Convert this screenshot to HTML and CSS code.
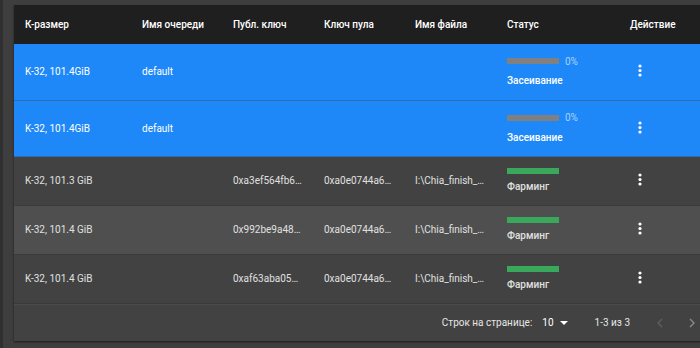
FILE: index.html
```html
<!DOCTYPE html>
<html lang="ru">
<head>
    <meta charset="UTF-8">
    <title>Плоты</title>
    <link rel="stylesheet" href="styles.css">
</head>
<body>
<div class="page">
    <div class="edge"></div>
    <div class="main">
        <div class="card">
            <table class="plots">
                <colgroup>
                    <col class="c1"><col class="c2"><col class="c3"><col class="c4"><col class="c5"><col class="c6"><col class="c7">
                </colgroup>
                <thead>
                <tr>
                    <th>К-размер</th>
                    <th>Имя очереди</th>
                    <th>Публ. ключ</th>
                    <th>Ключ пула</th>
                    <th>Имя файла</th>
                    <th>Статус</th>
                    <th>Действие</th>
                </tr>
                </thead>
                <tbody>
                <tr class="selected">
                    <td>K-32, 101.4GiB</td>
                    <td>default</td>
                    <td></td>
                    <td></td>
                    <td></td>
                    <td>
                        <div class="status">
                            <div class="bar-line"><span class="bar grey"></span><span class="pct">0%</span></div>
                            <div class="label">Засеивание</div>
                        </div>
                    </td>
                    <td><span class="kebab"><svg width="4" height="13" viewBox="0 0 4 13"><circle cx="2" cy="2" r="1.6"/><circle cx="2" cy="6.5" r="1.6"/><circle cx="2" cy="11" r="1.6"/></svg></span></td>
                </tr>
                <tr class="selected">
                    <td>K-32, 101.4GiB</td>
                    <td>default</td>
                    <td></td>
                    <td></td>
                    <td></td>
                    <td>
                        <div class="status">
                            <div class="bar-line"><span class="bar grey"></span><span class="pct">0%</span></div>
                            <div class="label">Засеивание</div>
                        </div>
                    </td>
                    <td><span class="kebab"><svg width="4" height="13" viewBox="0 0 4 13"><circle cx="2" cy="2" r="1.6"/><circle cx="2" cy="6.5" r="1.6"/><circle cx="2" cy="11" r="1.6"/></svg></span></td>
                </tr>
                <tr>
                    <td>K-32, 101.3 GiB</td>
                    <td></td>
                    <td>0xa3ef564fb6…</td>
                    <td>0xa0e0744a6…</td>
                    <td>I:\Chia_finish_…</td>
                    <td>
                        <div class="status farm">
                            <div class="bar-line"><span class="bar green"></span></div>
                            <div class="label">Фарминг</div>
                        </div>
                    </td>
                    <td><span class="kebab"><svg width="4" height="13" viewBox="0 0 4 13"><circle cx="2" cy="2" r="1.6"/><circle cx="2" cy="6.5" r="1.6"/><circle cx="2" cy="11" r="1.6"/></svg></span></td>
                </tr>
                <tr class="hover">
                    <td>K-32, 101.4 GiB</td>
                    <td></td>
                    <td>0x992be9a48…</td>
                    <td>0xa0e0744a6…</td>
                    <td>I:\Chia_finish_…</td>
                    <td>
                        <div class="status farm">
                            <div class="bar-line"><span class="bar green"></span></div>
                            <div class="label">Фарминг</div>
                        </div>
                    </td>
                    <td><span class="kebab"><svg width="4" height="13" viewBox="0 0 4 13"><circle cx="2" cy="2" r="1.6"/><circle cx="2" cy="6.5" r="1.6"/><circle cx="2" cy="11" r="1.6"/></svg></span></td>
                </tr>
                <tr>
                    <td>K-32, 101.4 GiB</td>
                    <td></td>
                    <td>0xaf63aba05…</td>
                    <td>0xa0e0744a6…</td>
                    <td>I:\Chia_finish_…</td>
                    <td>
                        <div class="status farm">
                            <div class="bar-line"><span class="bar green"></span></div>
                            <div class="label">Фарминг</div>
                        </div>
                    </td>
                    <td><span class="kebab"><svg width="4" height="13" viewBox="0 0 4 13"><circle cx="2" cy="2" r="1.6"/><circle cx="2" cy="6.5" r="1.6"/><circle cx="2" cy="11" r="1.6"/></svg></span></td>
                </tr>
                </tbody>
            </table>
            <div class="pager">
                <span class="rows-label">Строк на странице:</span>
                <span class="rows-select">10 <svg width="8" height="4" viewBox="0 0 8 4"><path d="M0 0h8L4 4z"/></svg></span>
                <span class="range">1-3 из 3</span>
                <span class="nav prev"><svg width="6" height="10" viewBox="0 0 6 10"><path d="M5 1L1 5l4 4" fill="none" stroke-width="1.4"/></svg></span>
                <span class="nav next"><svg width="6" height="10" viewBox="0 0 6 10"><path d="M1 1l4 4-4 4" fill="none" stroke-width="1.4"/></svg></span>
            </div>
        </div>
    </div>
</div>
</body>
</html>
```

FILE: styles.css
```css
* {
    margin: 0;
    padding: 0;
    box-sizing: border-box;
}

html, body {
    height: 100%;
    overflow: hidden;
}

body {
    background-color: #424242;
    font-family: Roboto, "Noto Sans", sans-serif;
    font-size: 10px;
    color: #e0e0e0;
}

.page {
    display: flex;
    height: 100%;
}

.edge {
    width: 3px;
    flex-shrink: 0;
    background-color: #303030;
}

.main {
    flex-shrink: 0;
    padding: 5px 0 0 11px;
    background-color: #3e3e3e;
}

.card {
    width: 701px;
    background-color: #424242;
    box-shadow: 0 1px 2px rgba(0, 0, 0, 0.6);
}

.plots {
    width: 100%;
    border-collapse: collapse;
    table-layout: fixed;
}

.c1 { width: 117px; }
.c2 { width: 91px; }
.c3 { width: 91px; }
.c4 { width: 91px; }
.c5 { width: 92px; }
.c6 { width: 123px; }

.plots th {
    height: 39px;
    padding: 0 11px;
    background-color: #1f1f1f;
    color: #fff;
    font-weight: 500;
    text-align: left;
    white-space: nowrap;
}

.plots td {
    height: 49px;
    padding: 0 11px;
    white-space: nowrap;
    overflow: hidden;
    border-bottom: 1px solid #3a3a3a;
    vertical-align: middle;
}

.plots tr.selected td {
    height: 56px;
    background-color: #1e88f8;
    color: #fff;
    border-bottom-color: #2f6cb0;
}

.plots tr.selected + tr td {
    border-top: 1px solid #2e2e2e;
}

.plots tr.hover td {
    background-color: #4f4f4f;
}

.status .bar-line {
    display: flex;
    align-items: center;
    height: 12px;
}

.status.farm .bar-line {
    height: 8px;
}

.bar {
    display: inline-block;
    width: 52px;
    height: 6px;
}

.bar.grey {
    background-color: #808080;
}

.bar.green {
    background-color: #3aa85a;
}

.pct {
    margin-left: 6px;
    color: #a9d2fb;
    font-size: 10px;
}

.status .label {
    margin-top: 7px;
    line-height: 14px;
    font-weight: 500;
}

.status.farm .label {
    margin-top: 5px;
}

.kebab {
    display: inline-flex;
    justify-content: center;
    width: 20px;
}

.kebab svg {
    fill: #fff;
}

.pager {
    display: flex;
    align-items: center;
    justify-content: flex-end;
    height: 37px;
    padding-right: 13px;
    border-top: 1px solid #4a4a4a;
    color: #e6e6e6;
}

.rows-select {
    display: inline-flex;
    align-items: center;
    margin-left: 10px;
    color: #fff;
}

.rows-select svg {
    margin-left: 6px;
    fill: #fff;
}

.range {
    margin-left: 27px;
}

.nav {
    display: inline-flex;
    justify-content: center;
    width: 20px;
}

.nav.prev {
    margin-left: 20px;
}

.nav.next {
    margin-left: 12px;
}

.nav.prev svg {
    stroke: #5e5e5e;
}

.nav.next svg {
    stroke: #8a8a8a;
}
```
